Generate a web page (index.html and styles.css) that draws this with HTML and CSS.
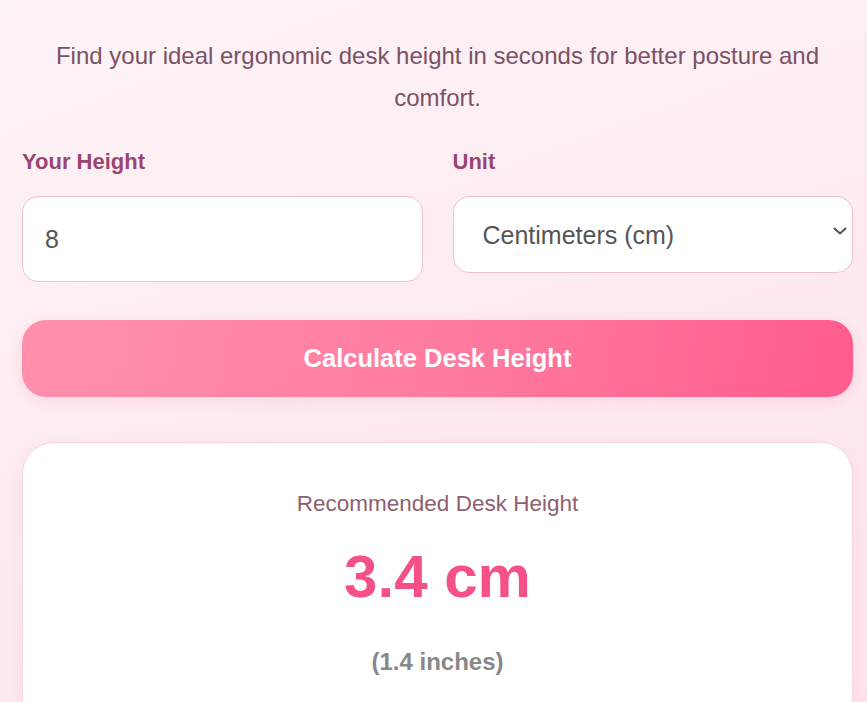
FILE: index.html
```html
<!DOCTYPE html>
<html lang="en">
<head>
    <meta charset="UTF-8">
    <meta name="viewport" content="width=device-width, initial-scale=1.0">
    <title>Desk Height Calculator</title>
    <link rel="stylesheet" href="styles.css">
</head>
<body>
    <div class="container">
        <p class="subtitle">Find your ideal ergonomic desk height in seconds for better posture and comfort.</p>

        <!-- Inputs -->
        <div class="form-row">
            <div class="field">
                <label for="height">Your Height</label>
                <input type="number" id="height" value="8">
            </div>
            <div class="field">
                <label for="unit">Unit</label>
                <div class="select-wrap">
                    <select id="unit">
                        <option value="cm" selected>Centimeters (cm)</option>
                        <option value="in">Inches (in)</option>
                    </select>
                    <svg class="chevron" width="14" height="8" viewBox="0 0 14 8">
                        <path d="M1.5 1.5 L7 6.5 L12.5 1.5" fill="none" stroke="#555" stroke-width="2" stroke-linecap="round" stroke-linejoin="round"/>
                    </svg>
                </div>
            </div>
        </div>

        <button class="btn-calc" id="calcBtn">Calculate Desk Height</button>

        <!-- Result -->
        <div class="result" id="result">
            <p class="result-label">Recommended Desk Height</p>
            <p class="result-value" id="resultValue">3.4 cm</p>
            <p class="result-alt" id="resultAlt">(1.4 inches)</p>
        </div>
    </div>
</body>
</html>
```

FILE: styles.css
```css
* {
    box-sizing: border-box;
    margin: 0;
    padding: 0;
}

body {
    font-family: 'Liberation Sans', Arial, sans-serif;
    min-height: 100vh;
    background: linear-gradient(160deg, #fdf4f8 0%, #fde9f0 60%, #fde3ec 100%);
    overflow: hidden;
}

.container {
    padding: 35px 14px 0 22px;
}

.subtitle {
    font-size: 24px;
    line-height: 1.75;
    color: #7a5164;
    text-align: center;
    margin-bottom: 30px;
}

.form-row {
    display: grid;
    grid-template-columns: 1fr 1fr;
    gap: 30px;
    align-items: start;
}

.field label {
    display: block;
    font-size: 22px;
    font-weight: bold;
    color: #9a4570;
    margin-bottom: 21px;
}

.field input,
.field select {
    width: 100%;
    font-family: inherit;
    font-size: 25px;
    color: #555;
    background-color: #fff;
    border: 1px solid #ecc2d2;
    border-radius: 16px;
    outline: none;
}

.field input {
    height: 86px;
    padding: 0 22px;
}

.select-wrap {
    position: relative;
}

.field select {
    appearance: none;
    -webkit-appearance: none;
    height: 77px;
    padding: 0 50px 0 29px;
}

.chevron {
    position: absolute;
    right: 6px;
    top: 31px;
    pointer-events: none;
}

.btn-calc {
    display: block;
    width: 100%;
    height: 77px;
    margin-top: 38px;
    border: none;
    border-radius: 24px;
    background: linear-gradient(100deg, #ff90ad 0%, #ff7ca0 50%, #ff5c8d 100%);
    color: #fff;
    font-family: inherit;
    font-size: 25.5px;
    font-weight: bold;
    box-shadow: 0 4px 14px rgba(255, 92, 141, 0.15);
    cursor: pointer;
}

.result {
    margin-top: 45px;
    background-color: #fff;
    border: 1px solid #f7d6e1;
    border-radius: 32px;
    padding: 48px 20px 60px;
    text-align: center;
    box-shadow: 0 4px 18px rgba(240, 150, 180, 0.12);
}

.result-label {
    font-size: 22.5px;
    color: #8e5f70;
    margin-bottom: 25px;
}

.result-value {
    font-size: 60px;
    font-weight: bold;
    color: #f5508a;
    margin-bottom: 37px;
}

.result-alt {
    font-size: 24px;
    font-weight: bold;
    color: #888;
}
```
